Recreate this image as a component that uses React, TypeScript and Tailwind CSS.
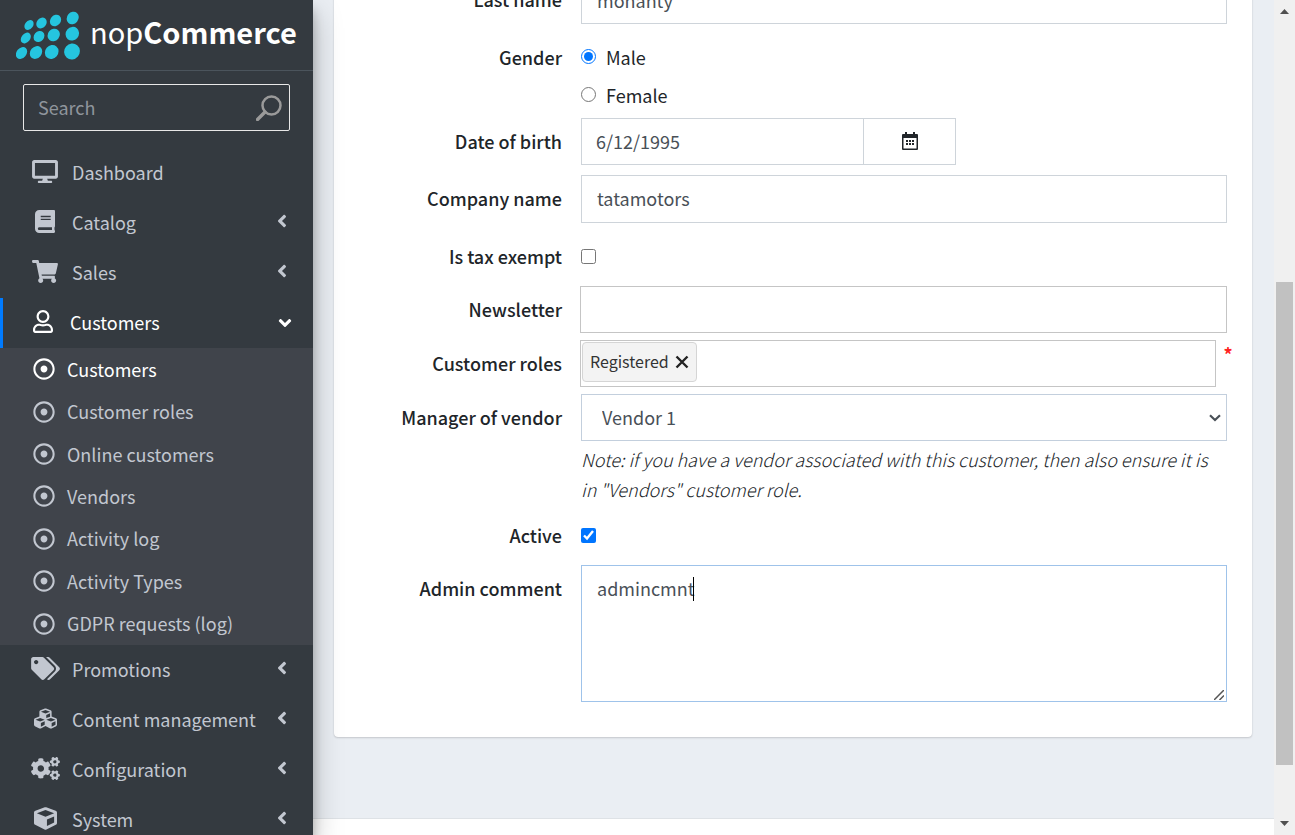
import type { ReactNode } from "react";
import type { IconType } from "react-icons";
import {
  FaAngleDown,
  FaAngleLeft,
  FaBook,
  FaCogs,
  FaCube,
  FaCubes,
  FaDesktop,
  FaRegDotCircle,
  FaRegUser,
  FaShoppingCart,
  FaTags,
} from "react-icons/fa";

type NavEntry = { label: string; icon: IconType; iconClass: string; leaf?: boolean };

const topEntries: NavEntry[] = [
  { label: "Dashboard", icon: FaDesktop, iconClass: "w-[26px]", leaf: true },
  { label: "Catalog", icon: FaBook, iconClass: "w-5" },
  { label: "Sales", icon: FaShoppingCart, iconClass: "w-[26px]" },
];

const bottomEntries: NavEntry[] = [
  { label: "Promotions", icon: FaTags, iconClass: "w-[29px]" },
  { label: "Content management", icon: FaCubes, iconClass: "w-[23px]" },
  { label: "Configuration", icon: FaCogs, iconClass: "w-[29px]" },
  { label: "System", icon: FaCube, iconClass: "w-[23px]" },
];

const customerPages = [
  "Customers",
  "Customer roles",
  "Online customers",
  "Vendors",
  "Activity log",
  "Activity Types",
  "GDPR requests (log)",
];

const logoDots = [
  [29, 25, 4, 5.4], [41.5, 23, 4.8, 5.8], [55.5, 20.5, 5.2, 6.2], [72.7, 18, 5.7, 6.6],
  [25.8, 38, 4.3, 6], [39, 36.5, 5, 6], [53.7, 35, 5.9, 6.6], [72.3, 33.7, 6.5, 7.1],
  [21.5, 53, 4.9, 6.6], [36, 52.5, 5.7, 6.9], [51.7, 52, 6.5, 7.3], [72, 51.5, 7.7, 8.1],
];

function Logo() {
  return (
    <a href="#" className="flex h-[71px] shrink-0 items-start border-b border-[#4b545c] pl-4">
      <svg viewBox="16 11 64 50" className="mt-[11px] h-[50px] w-16 shrink-0" aria-hidden="true">
        {logoDots.map(([cx, cy, rx, ry]) => (
          <ellipse key={`${cx}-${cy}`} cx={cx} cy={cy} rx={rx} ry={ry} fill="#25c5df" transform={`rotate(40 ${cx} ${cy})`} />
        ))}
      </svg>
      <span className="mt-[10px] ml-[10px] text-[29px] leading-[42px] whitespace-nowrap text-white">
        nop<b className="font-bold">Commerce</b>
      </span>
    </a>
  );
}

function NavRow({ entry }: { entry: NavEntry }) {
  const Icon = entry.icon;
  return (
    <li>
      <a href="#" className="flex h-[50px] items-center pr-[26px] pl-[30px] text-[#c2c7d0]">
        <span className="flex w-[30px] justify-center pb-1">
          <Icon className={`h-[23px] ${entry.iconClass}`} />
        </span>
        <span className="ml-3 flex-1 pb-0.5">{entry.label}</span>
        {!entry.leaf && <FaAngleLeft className="mb-1 h-5 w-[10px]" />}
      </a>
    </li>
  );
}

function Sidebar() {
  return (
    <aside className="z-10 flex w-[313px] shrink-0 flex-col overflow-hidden bg-[#343a40] shadow-[0_14px_28px_rgba(0,0,0,0.25),0_10px_10px_rgba(0,0,0,0.22)]">
      <Logo />
      <div className="mx-[23px] mt-[13px] flex h-[47px] shrink-0 items-center rounded-[2px] border border-[#e8e8e8] pr-[7px] pl-[14px]">
        <input
          aria-label="Search"
          placeholder="Search"
          className="min-w-0 flex-1 bg-transparent pb-0.5 text-white outline-none placeholder:text-[#8f959c]"
        />
        <svg viewBox="0 0 26 26" className="size-[26px]" fill="none" stroke="#9a9a9a" aria-hidden="true">
          <circle cx="15.5" cy="10.5" r="9" strokeWidth="2.5" />
          <path d="M9 17L1.500 24.500" strokeWidth="3.400" strokeLinecap="round" />
        </svg>
      </div>
      <nav className="mt-[17px]">
        <ul>
          {topEntries.map((entry) => (
            <NavRow key={entry.label} entry={entry} />
          ))}
          <li>
            <a href="#" className="flex h-[50px] items-center border-l-[3px] border-[#007bff] pr-[21px] pl-[25px] text-white">
              <span className="flex w-[30px] justify-center pb-1">
                <FaRegUser className="h-[23px] w-5" />
              </span>
              <span className="ml-3 flex-1 pb-0.5">Customers</span>
              <FaAngleDown className="h-5 w-[14px]" />
            </a>
            <ul className="flex h-[297px] flex-col bg-[#40444b]">
              {customerPages.map((page, index) => (
                <li key={page} className="flex flex-1">
                  <a
                    href="#"
                    className={index === 0 ? "flex flex-1 items-center pl-[33px] text-white" : "flex flex-1 items-center pl-[33px] text-[#c2c7d0]"}
                  >
                    <FaRegDotCircle className="size-[22px]" />
                    <span className="ml-3 pb-px">{page}</span>
                  </a>
                </li>
              ))}
            </ul>
          </li>
          {bottomEntries.map((entry) => (
            <NavRow key={entry.label} entry={entry} />
          ))}
        </ul>
      </nav>
    </aside>
  );
}

type FieldProps = { label: string; htmlFor?: string; className?: string; children: ReactNode };

function Field({ label, htmlFor, className = "", children }: FieldProps) {
  return (
    <div className={`flex items-start gap-[19px] ${className}`}>
      <label htmlFor={htmlFor} className="w-[203px] shrink-0 text-right leading-[46px] font-medium text-[#212529]">
        {label}
      </label>
      <div className="min-w-0 flex-1">{children}</div>
    </div>
  );
}

function CalendarIcon() {
  return (
    <svg viewBox="0 0 16 18" className="h-[18px] w-4" fill="#212529" aria-hidden="true">
      <path d="M3 0h2v2h6V0h2v2h2a1 1 0 0 1 1 1v14a1 1 0 0 1-1 1H1a1 1 0 0 1-1-1V3a1 1 0 0 1 1-1h2zM1.500 6v10.500h13V6z" fillRule="evenodd" />
      <path d="M4 8h2v2H4zM7 8h2v2H7zM10 8h2v2h-2zM4 11h2v2H4zM7 11h2v2H7zM10 11h2v2h-2z" />
    </svg>
  );
}

function CustomerForm() {
  return (
    <form className="-mt-6 rounded-[4px] bg-white px-[25px] pb-[35px] shadow-[0_0_1px_rgba(0,0,0,0.13),0_1px_2px_rgba(0,0,0,0.15)]">
      <Field label="Last name" htmlFor="last">
        <input id="last" defaultValue="mohanty" className="block h-12 w-full border border-[#ced4da] px-[15px] text-[#495057] outline-none" />
      </Field>
      <Field label="Gender" className="mt-[10px]">
        <div className="flex flex-col pt-[5px]">
          <label className="flex h-[38px] items-center gap-[10px] pb-0.5 text-[#212529]">
            <input type="radio" name="gender" defaultChecked className="mb-0.5 size-[15px] accent-[#0075ff]" />
            Male
          </label>
          <label className="flex h-[38px] items-center gap-[10px] pb-0.5 text-[#212529]">
            <input type="radio" name="gender" className="mb-0.5 size-[15px]" />
            Female
          </label>
        </div>
      </Field>
      <Field label="Date of birth" htmlFor="dob" className="mt-[3px]">
        <div className="flex h-[47px] w-[375px] border border-[#ced4da]">
          <input id="dob" defaultValue="6/12/1995" className="min-w-0 flex-1 px-[14px] pb-0.5 text-[#495057] outline-none" />
          <button type="button" aria-label="Open calendar" className="flex w-[92px] items-center justify-center border-l border-[#ced4da] pb-0.5">
            <CalendarIcon />
          </button>
        </div>
      </Field>
      <Field label="Company name" htmlFor="company" className="mt-[10px]">
        <input id="company" defaultValue="tatamotors" className="block h-12 w-full border border-[#ced4da] px-[15px] pb-0.5 text-[#495057] outline-none" />
      </Field>
      <Field label="Is tax exempt" htmlFor="tax" className="mt-[10px]">
        <div className="flex h-[47px] items-center">
          <input id="tax" type="checkbox" className="size-[15px]" />
        </div>
      </Field>
      <Field label="Newsletter" htmlFor="newsletter" className="mt-[6px]">
        <div className="-ml-px">
          <input id="newsletter" className="block h-[47px] w-full border border-[#c5c5c5] px-2 outline-none" />
        </div>
      </Field>
      <Field label="Customer roles" htmlFor="roles" className="mt-[7px]">
        <div className="-ml-px flex items-start">
          <div className="flex h-[47px] flex-1 items-start border border-[#c5c5c5] p-px">
            <span className="flex h-10 items-center gap-[6px] rounded-[4px] border border-[#d5d5d5] bg-[#f3f3f3] px-[7px] text-[16px] text-[#333]">
              <span className="pb-0.5">Registered</span>
              <button type="button" aria-label="Remove Registered">
                <svg viewBox="0 0 14 14" className="size-[14px]" stroke="#222" strokeWidth="2.4" aria-hidden="true">
                  <path d="M1.500 1.500L12.500 12.500M12.500 1.500L1.500 12.500" />
                </svg>
              </button>
            </span>
            <input id="roles" className="h-full min-w-0 flex-1 px-2 outline-none" />
          </div>
          <span className="-mr-[13px] w-6 pt-1 text-center leading-5 font-bold text-[#f22]">*</span>
        </div>
      </Field>
      <Field label="Manager of vendor" htmlFor="vendor" className="mt-[7px]">
        <div className="relative">
          <select id="vendor" className="block h-[47px] w-full appearance-none border border-[#c3cfdd] bg-white px-5 pb-0.5 text-[#495057] outline-none">
            <option>Vendor 1</option>
          </select>
          <svg viewBox="0 0 12 8" className="pointer-events-none absolute top-5 right-[6px] h-2 w-3" fill="none" stroke="#495057" strokeWidth="2.2" aria-hidden="true">
            <path d="M1 1.200L6 6L11 1.200" />
          </svg>
        </div>
        <p className="mt-[3px] mb-2 pr-3 leading-[30px] font-light text-[#212529] italic">
          Note: if you have a vendor associated with this customer, then also ensure it is in "Vendors" customer role.
        </p>
      </Field>
      <Field label="Active" htmlFor="active">
        <div className="flex h-[47px] items-center">
          <input id="active" type="checkbox" defaultChecked className="size-[15px] accent-[#0075ff]" />
        </div>
      </Field>
      <Field label="Admin comment" htmlFor="comment" className="mt-[6px]">
        <div className="relative">
          <textarea
            id="comment"
            defaultValue="admincmnt"
            className="block h-[137px] w-full resize-none border border-[#9fc3ea] px-[15px] py-[7px] leading-[30px] text-[#495057] outline-none"
          />
          <span className="absolute top-3 left-[112px] h-6 w-px bg-black" />
          <svg viewBox="0 0 10 10" className="absolute right-[3px] bottom-[2px] size-[10px]" stroke="#555" strokeWidth="1.5" aria-hidden="true">
            <path d="M0 10L10 0M5.500 10L10 5.500" />
          </svg>
        </div>
      </Field>
    </form>
  );
}

function ScrollRail() {
  return (
    <div className="flex w-[21px] shrink-0 flex-col items-center bg-[#f0f0f0]" aria-hidden="true">
      <svg viewBox="0 0 9 5" className="mt-[9px] h-[5px] w-[9px]" fill="#505050">
        <path d="M0 5L4.500 0L9 5z" />
      </svg>
      <div className="grow-[268]" />
      <div className="h-[483px] w-[17px] bg-[#c1c1c1]" />
      <div className="grow-[56]" />
      <svg viewBox="0 0 9 5" className="mb-[9px] h-[5px] w-[9px]" fill="#505050">
        <path d="M0 0L4.500 5L9 0z" />
      </svg>
    </div>
  );
}

export default function App() {
  return (
    <div className="flex h-screen overflow-hidden bg-[#eaeef3] font-['Noto_Sans_CJK_SC','Noto_Sans',sans-serif] text-[18px] leading-[30px]">
      <Sidebar />
      <main className="flex min-w-0 flex-1 flex-col">
        <div className="flex-1 pr-[22px] pl-[21px]">
          <CustomerForm />
        </div>
        <footer className="h-[17px] shrink-0 border-t border-[#dee2e6] bg-white" />
      </main>
      <ScrollRail />
    </div>
  );
}
